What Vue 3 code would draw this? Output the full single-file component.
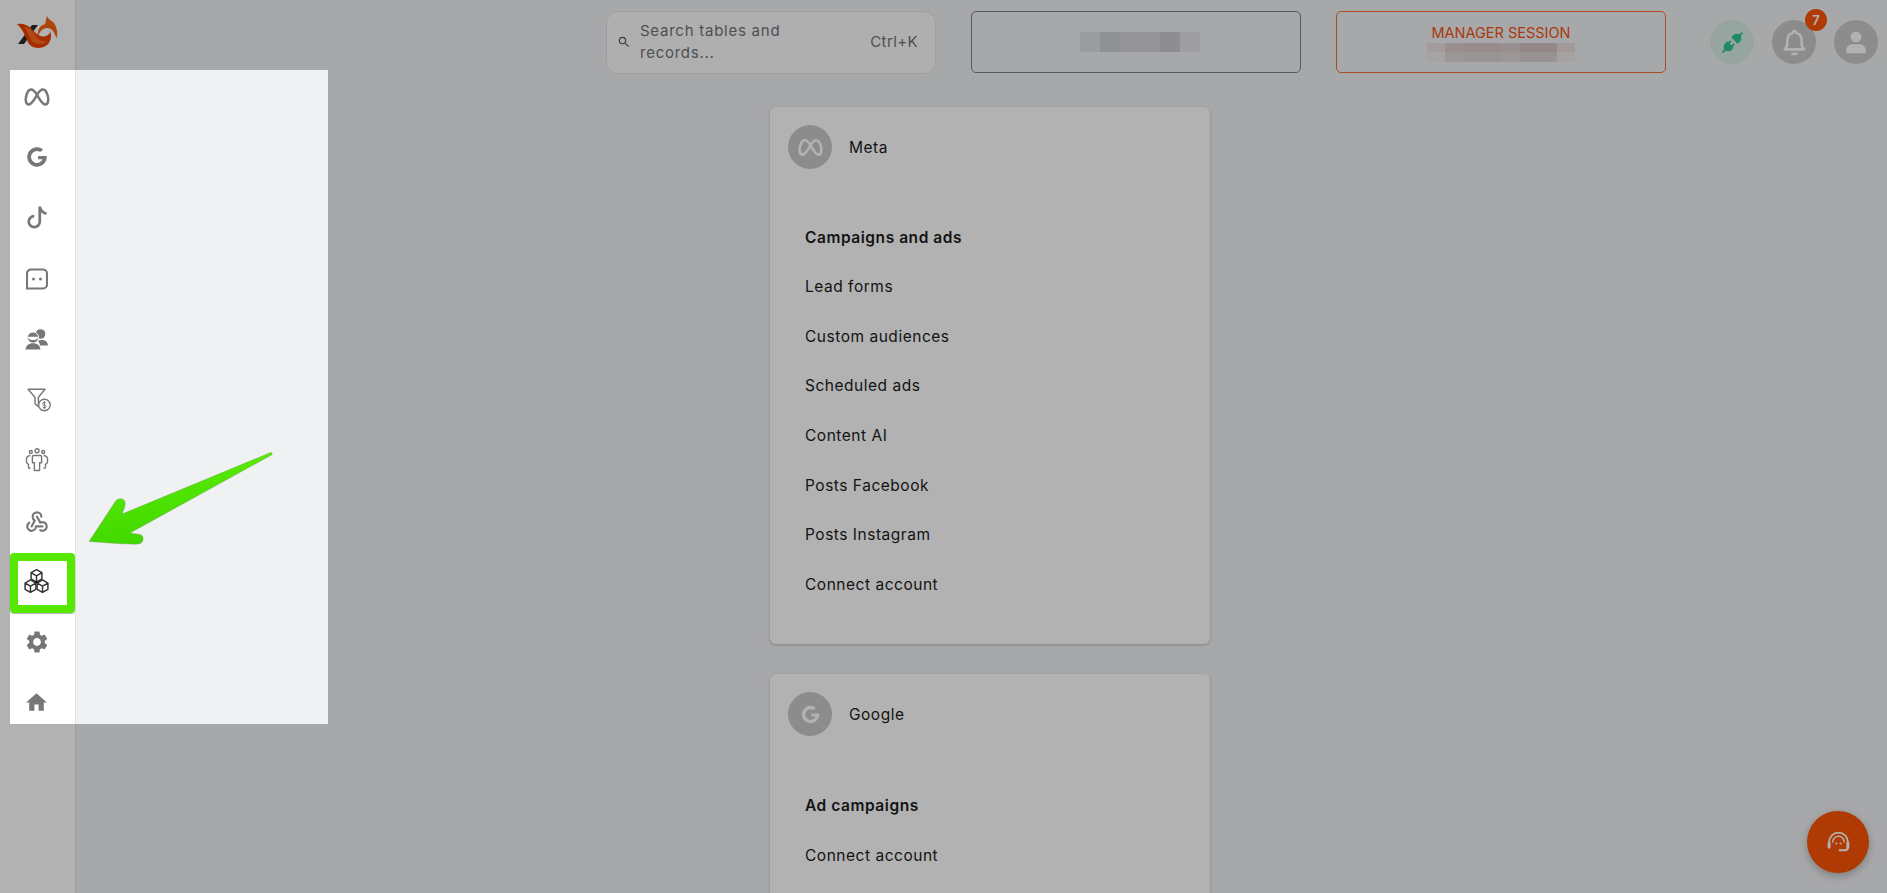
<script setup>
const metaPaths = [
  'M12 10.174c1.766 -2.784 3.315 -4.174 4.648 -4.174c2 0 3.263 2.213 4 5.217c.704 2.869 .5 6.783 -2 6.783c-1.114 0 -2.648 -1.565 -4.148 -3.652a27.627 27.627 0 0 1 -2.5 -4.174z',
  'M12 10.174c-1.766 -2.784 -3.315 -4.174 -4.648 -4.174c-2 0 -3.263 2.213 -4 5.217c-.704 2.869 -.5 6.783 2 6.783c1.114 0 2.648 -1.565 4.148 -3.652c1 -1.391 1.833 -2.783 2.5 -4.174z'
]
const googlePath = 'M20.945 11a9 9 0 1 1 -3.284 -5.997l-2.655 2.392a5.5 5.5 0 1 0 2.119 6.605h-4.125v-3h7.945z'
const gear = 'M19.14,12.94c0.04-0.3,0.06-0.61,0.06-0.94c0-0.32-0.02-0.64-0.07-0.94l2.03-1.58c0.18-0.14,0.23-0.41,0.12-0.61 l-1.92-3.32c-0.12-0.22-0.37-0.29-0.59-0.22l-2.39,0.96c-0.5-0.38-1.03-0.7-1.62-0.94L14.4,2.81c-0.04-0.24-0.24-0.41-0.48-0.41 h-3.84c-0.24,0-0.43,0.17-0.47,0.41L9.25,5.35C8.66,5.59,8.12,5.92,7.63,6.29L5.24,5.33c-0.22-0.08-0.47,0-0.59,0.22L2.74,8.87 C2.62,9.08,2.66,9.34,2.86,9.48l2.03,1.58C4.84,11.36,4.8,11.69,4.8,12s0.02,0.64,0.07,0.94l-2.03,1.58 c-0.18,0.14-0.23,0.41-0.12,0.61l1.92,3.32c0.12,0.22,0.37,0.29,0.59,0.22l2.39-0.96c0.5,0.38,1.03,0.7,1.62,0.94l0.36,2.54 c0.05,0.24,0.24,0.41,0.48,0.41h3.84c0.24,0,0.44-0.17,0.47-0.41l0.36-2.54c0.59-0.24,1.13-0.56,1.62-0.94l2.39,0.96 c0.22,0.08,0.47,0,0.59-0.22l1.92-3.32c0.12-0.22,0.07-0.47-0.12-0.61L19.14,12.94z M12,15.6c-1.98,0-3.6-1.62-3.6-3.6 s1.62-3.6,3.6-3.6s3.6,1.62,3.6,3.6S13.98,15.6,12,15.6z'
const metaLinks = ['Lead forms', 'Custom audiences', 'Scheduled ads', 'Content AI', 'Posts Facebook', 'Posts Instagram', 'Connect account']
const googleLinks = ['Connect account']
const blurA = ['#dfe0e3', '#cdced1', '#d4d5d8', '#d4d5d8', '#cbccd0', '#e3e3e6']
const blurTop = ['#e8e0e0', '#dccfcd', '#d8c8c8', '#d8c8c8', '#dcd0d0', '#d4c2c2', '#d4c2c2', '#e8dcdc']
const blurBottom = ['#efeaea', '#e0d8d8', '#dcd4d4', '#dcd4d4', '#e0d8d8', '#dcd2d2', '#dcd2d2', '#efe8e8']
</script>

<template>
  <div class="app">
    <aside class="rail">
      <div class="logo">
        <svg width="42" height="34" viewBox="16 15 42 34">
          <path d="M32 25 L38 25 L24 44 L18 44 Z" fill="#2a2a2a" />
          <path d="M17 24 C23 23 28 25 32 29 C36 34 41 38 46 36 C49 35 50 33 50 31 C52 35 51 42 47 45 C42 49 33 49 29 44 C26 39 24 30 17 24 Z" fill="#f04000" />
          <path d="M24 27 C29 27 33 31 36 36 C38 40 42 42 47 41 C43 45 36 45 32 41 C29 37 28 31 24 27 Z" fill="#ff6a20" />
          <path d="M39 29 C40 26 43 25 45 24 L47 16 C48 19 51 20 53 22 C56 25 58 31 57 38 L55 35 C54 31 51 28 47 28 C43 28 40 31 38 36 C37 33 38 31 39 29 Z" fill="#fb6412" />
        </svg>
      </div>
      <nav class="rail-list">
        <div class="rail-item">
          <svg class="stroke" width="30" height="30" viewBox="0 0 24 24"><path v-for="p in metaPaths" :key="p" :d="p" /></svg>
        </div>
        <div class="rail-item">
          <svg class="fill" width="26" height="26" viewBox="0 0 24 24"><path :d="googlePath" /></svg>
        </div>
        <div class="rail-item">
          <svg class="fill" width="22" height="23" viewBox="0 0 16 16"><path d="M9 0h1.98c.144.715.54 1.617 1.235 2.512C12.895 3.389 13.797 4 15 4v2c-1.753 0-3.07-.814-4-1.829V11a5 5 0 1 1-5-5v2a3 3 0 1 0 3 3V0Z" /></svg>
        </div>
        <div class="rail-item">
          <svg width="22" height="22" viewBox="0 0 22 22">
            <path d="M1 20.500V5.500A4 4 0 0 1 5 1.500h12a4 4 0 0 1 4 4v11a4 4 0 0 1-4 4z" fill="none" stroke="#777" stroke-width="2.100" />
            <circle cx="7.500" cy="11" r="1.500" fill="#777" /><circle cx="14.500" cy="11" r="1.500" fill="#777" />
          </svg>
        </div>
        <div class="rail-item">
          <svg class="fill" width="24" height="22" viewBox="0 0 24 22">
            <circle cx="15.500" cy="6" r="4.800" />
            <path d="M13 13c2-1.200 6-1.600 8 .2 1.200 1 1.800 2.600 2 4.300h-8c-.3-1.800-.9-3.300-2-4.500z" />
            <circle cx="8" cy="9.500" r="5.600" stroke="#fff" stroke-width="1" />
            <path d="M3.200 8.800h9.600v1.500c-1.200 2.400-8.400 2.400-9.600 0z" fill="#fff" />
            <path d="M0.600 21.500c0-3.700 3-6.300 7.400-6.300s7.400 2.600 7.400 6.300z" />
          </svg>
        </div>
        <div class="rail-item">
          <svg width="24" height="24" viewBox="0 0 24 24" class="shift-r" fill="none" stroke="#777">
            <path d="M1 1.200h17l-6.600 8v9.600l-3.400-3v-6.600z" stroke-width="1.400" stroke-linejoin="round" />
            <circle cx="17.400" cy="17" r="5.800" stroke-width="1.400" fill="#fff" />
            <path d="M19.200 15.200c-.5-1.100-3.600-1.200-3.700.4-.1 1.700 3.900 1.200 3.800 3-.1 1.500-3.500 1.500-4-.1M17.400 12.900v8.200" stroke-width="1" />
          </svg>
        </div>
        <div class="rail-item">
          <svg width="24" height="24" viewBox="0 0 24 24" fill="none" stroke="#777" stroke-width="1.400">
            <circle cx="12" cy="2.800" r="2" /><circle cx="5.800" cy="4" r="1.500" /><circle cx="18.200" cy="4" r="1.500" />
            <path d="M8.600 7.500h6.800c.8 0 1.200.5 1.200 1.200v6h-2v7.800H9.400v-7.800h-2v-6c0-.7.4-1.200 1.200-1.200z" stroke-linejoin="round" />
            <path d="M5.400 7.500C3.400 7.800 1.500 9 1.500 11v3c0 1.600 1.300 2 2 2.400v2.800c0 .7.5 1.100 1 1.100h1M18.600 7.500c2 .3 3.900 1.500 3.900 3.500v3c0 1.600-1.300 2-2 2.400v2.800c0 .7-.5 1.100-1 1.100h-1" />
          </svg>
        </div>
        <div class="rail-item">
          <svg class="stroke" width="26" height="26" viewBox="0 0 24 24">
            <path d="M4.876 13.610a4 4 0 1 0 6.124 3.390h6" />
            <path d="M15.066 20.502a4 4 0 1 0 1.934 -7.502c-.706 0 -1.424 .179 -2 .5l-3 -5.500" />
            <path d="M16 8a4 4 0 1 0 -8 0c0 1.506 .77 2.818 2 3.500l-3 5.500" />
          </svg>
        </div>
        <div class="rail-item">
          <svg width="27" height="27" viewBox="0 0 26 26" fill="none" stroke="#333" stroke-width="1.400" stroke-linejoin="round">
            <path d="M13 1.500l5.200 3v6l-5.200 3-5.200-3v-6zM7.800 4.500l5.200 3 5.200-3M13 7.500v6" />
            <path d="M7.200 11.500l5.200 3v6l-5.200 3-5.200-3v-6zM2 14.500l5.200 3 5.200-3M7.200 17.500v6" />
            <path d="M18.800 11.500l5.200 3v6l-5.200 3-5.200-3v-6zM13.600 14.500l5.200 3 5.200-3M18.800 17.500v6" />
            <circle cx="13" cy="13.500" r="1" fill="#000" stroke="none" />
          </svg>
        </div>
        <div class="rail-item">
          <svg class="fill" width="26" height="26" viewBox="0 0 24 24"><path :d="gear" /></svg>
        </div>
        <div class="rail-item">
          <svg class="fill" width="25" height="25" viewBox="0 0 24 24"><path d="M10 20v-6h4v6h5v-8h3L12 3 2 12h3v8z" /></svg>
        </div>
      </nav>
    </aside>

    <main class="main">
      <header class="topbar">
        <div class="search">
          <svg width="14" height="14" viewBox="0 0 24 24" fill="#555a60"><path d="M15.500 14h-.79l-.28-.27A6.471 6.471 0 0 0 16 9.500 6.500 6.500 0 1 0 9.500 16c1.610 0 3.090-.59 4.230-1.570l.27.28v.79l5 4.990L20.490 19l-4.990-5zm-6 0C7.010 14 5 11.990 5 9.500S7.010 5 9.500 5 14 7.010 14 9.500 11.990 14 9.500 14z" /></svg>
          <span class="search-text">Search tables and records...</span>
          <span class="shortcut">Ctrl+K</span>
        </div>
        <div class="session session-dark">
          <div class="mosaic">
            <i v-for="(c, i) in blurA" :key="i" :style="{ background: c }"></i>
          </div>
        </div>
        <div class="session session-orange">
          <span class="session-title">MANAGER SESSION</span>
          <div class="mosaic mosaic-small">
            <i v-for="(c, i) in blurTop" :key="'t' + i" :style="{ background: c }"></i>
          </div>
          <div class="mosaic mosaic-small">
            <i v-for="(c, i) in blurBottom" :key="'b' + i" :style="{ background: c }"></i>
          </div>
        </div>
        <div class="round round-green">
          <svg width="25" height="25" viewBox="0 0 24 24" fill="#2cc892" stroke="#2cc892" stroke-width="1.800" stroke-linecap="round" stroke-linejoin="round">
            <path d="M7 12l5 5l-1.500 1.500a3.536 3.536 0 1 1 -5 -5l1.500 -1.500z" />
            <path d="M17 12l-5 -5l1.500 -1.500a3.536 3.536 0 1 1 5 5l-1.500 1.500z" />
            <path d="M3 21l2.500 -2.500M18.500 5.500l2.500 -2.500M10 11l-2 2M13 14l-2 2" />
          </svg>
        </div>
        <div class="round bell">
          <svg width="31" height="31" viewBox="0 0 24 24" fill="none" stroke="#fff" stroke-width="2" stroke-linecap="round" stroke-linejoin="round">
            <path d="M12 3.200a1.400 1.400 0 0 1 1.400 1.500c3 .8 4.200 3 4.200 6v3.600l1.800 3H4.600l1.800-3v-3.600c0-3 1.200-5.200 4.200-6A1.400 1.400 0 0 1 12 3.200z" />
            <path d="M10.400 20.800h3.200" />
          </svg>
          <span class="badge">7</span>
        </div>
        <div class="round">
          <svg width="28" height="28" viewBox="0 0 24 24" fill="#fff"><circle cx="12" cy="7.600" r="4.600" /><path d="M3.600 21v-1.800c0-3.400 3-5.200 5.400-5.200h6c2.400 0 5.400 1.800 5.400 5.200V21a1 1 0 0 1-1 .6H4.600a1 1 0 0 1-1-.6z" /></svg>
        </div>
      </header>

      <section class="cards">
        <article class="card">
          <div class="card-head">
            <div class="avatar">
              <svg width="29" height="29" viewBox="0 0 24 24" fill="none" stroke="#fff" stroke-width="2.200"><path v-for="p in metaPaths" :key="p" :d="p" /></svg>
            </div>
            <span>Meta</span>
          </div>
          <ul class="links">
            <li class="strong">Campaigns and ads</li>
            <li v-for="l in metaLinks" :key="l">{{ l }}</li>
          </ul>
        </article>
        <article class="card">
          <div class="card-head">
            <div class="avatar">
              <svg width="23" height="23" viewBox="0 0 24 24" fill="#fff"><path :d="googlePath" /></svg>
            </div>
            <span>Google</span>
          </div>
          <ul class="links">
            <li class="strong">Ad campaigns</li>
            <li v-for="l in googleLinks" :key="l">{{ l }}</li>
          </ul>
        </article>
      </section>

      <button class="fab" type="button" aria-label="Support">
        <svg width="25" height="25" viewBox="0 0 24 24" fill="none" stroke="#fff" stroke-width="1.700" stroke-linecap="round">
          <path d="M3 13v-1.500a9 9 0 0 1 18 0V13" />
          <path d="M6.500 11.500a5.500 5.500 0 0 1 11 0" stroke-width="1.300" />
          <path d="M3 12.500v4M21 12.500v4" stroke-width="2.800" />
          <path d="M21 16.500c0 2-1.200 3-3 3h-5" stroke-width="1.900" />
          <circle cx="10" cy="13" r="1" fill="#fff" stroke="none" /><circle cx="14" cy="13" r="1" fill="#fff" stroke="none" />
        </svg>
      </button>
    </main>

    <div class="tour">
      <div class="spotlight"></div>
      <div class="marker"></div>
      <svg class="arrow" width="200" height="110" viewBox="80 445 200 110">
        <defs>
          <linearGradient id="arrowFill" x1="0" y1="0" x2="0.2" y2="1">
            <stop offset="0" stop-color="#5cf000" />
            <stop offset="1" stop-color="#42d800" />
          </linearGradient>
        </defs>
        <path d="M89 541.500 L115 502 C117 498 122 498 124 500 C126 503 125.500 506 122 514 L270.500 452.600 C272 452 273 454 271.500 455 L130 533 L140 534.500 C144 535.500 144 541 141 543 C139 545 128 544 117 543.600 Z" fill="url(#arrowFill)" stroke="#777" stroke-width=".3" />
      </svg>
    </div>
  </div>
</template>

<style scoped>
.app {
  display: flex;
  width: 1887px;
  height: 893px;
  overflow: hidden;
  position: relative;
  background: #f0f1f3;
  font-family: Inter, "Liberation Sans", sans-serif;
  color: #1c1c1c;
}
.rail {
  width: 75px;
  flex: none;
  background: #fff;
  border-right: 1px solid #dfe1e5;
  display: flex;
  flex-direction: column;
}
.logo {
  height: 66.500px;
  flex: none;
  padding: 15px 0 0 16px;
  box-sizing: border-box;
}
.logo svg { display: block; }
.rail-list { display: flex; flex-direction: column; }
.rail-item {
  height: 60.600px;
  display: flex;
  align-items: center;
  justify-content: center;
  padding-right: 2px;
  box-sizing: border-box;
}
.stroke { fill: none; stroke: #777; stroke-width: 2; stroke-linecap: round; stroke-linejoin: round; }
.fill { fill: #777; }
.shift-r { margin-left: 4px; }
.main { flex: 1; position: relative; min-width: 0; }
.topbar {
  display: flex;
  align-items: center;
  height: 84px;
  padding-left: 530px;
  box-sizing: border-box;
}
.search {
  width: 330px;
  height: 63px;
  flex: none;
  box-sizing: border-box;
  background: #fbfbfb;
  border: 1px solid #e2e3e5;
  border-radius: 12px;
  display: flex;
  align-items: center;
  padding: 0 17px 0 10px;
  color: #6f7378;
  font-size: 15px;
  letter-spacing: .75px;
  line-height: 22px;
}
.search-text { width: 150px; margin-left: 9px; }
.shortcut { margin-left: auto; letter-spacing: .4px; }
.session {
  width: 330px;
  height: 62px;
  box-sizing: border-box;
  border-radius: 5px;
  flex: none;
  margin-left: 35px;
  display: flex;
  flex-direction: column;
  align-items: center;
  justify-content: center;
}
.session-dark { border: 1px solid #7c7f85; padding-left: 7px; }
.session-orange { border: 1px solid #f46d3a; }
.session-title {
  color: #f0530f;
  font-size: 14.500px;
  line-height: 20px;
}
.mosaic { display: flex; height: 20px; flex: none; }
.mosaic i { width: 20px; display: block; }
.mosaic-small { height: 9.500px; }
.mosaic-small i { width: 18.600px; }
.round {
  width: 44px;
  height: 44px;
  flex: none;
  border-radius: 50%;
  background: #c9c9c9;
  margin-left: 18px;
  display: flex;
  align-items: center;
  justify-content: center;
  position: relative;
}
.round-green { background: #d8ece6; margin-left: 44px; }
.badge {
  position: absolute;
  top: -11px;
  right: -11px;
  width: 22px;
  height: 22px;
  border-radius: 50%;
  background: #fc5305;
  color: #fff;
  font-size: 13px;
  font-weight: 600;
  display: flex;
  align-items: center;
  justify-content: center;
}
.cards {
  padding: 23px 0 0 694px;
  display: flex;
  flex-direction: column;
  gap: 30px;
}
.card {
  width: 440px;
  height: 537px;
  flex: none;
  box-sizing: border-box;
  background: #fff;
  border-radius: 6px;
  box-shadow: 0 1px 3px rgba(0, 0, 0, .22);
  padding: 18px 18px 0;
}
.card-head {
  display: flex;
  align-items: center;
  gap: 17px;
  font-size: 15.500px;
  letter-spacing: .5px;
  height: 44px;
}
.avatar {
  width: 44px;
  height: 44px;
  border-radius: 50%;
  background: #c9c9c9;
  display: flex;
  align-items: center;
  justify-content: center;
}
.links {
  list-style: none;
  margin: 44px 0 0;
  padding: 0 0 0 17px;
  font-size: 15.500px;
  letter-spacing: .52px;
}
.links li {
  height: 49.600px;
  display: flex;
  align-items: center;
}
.links .strong {
  height: 49px;
  font-weight: 600;
  letter-spacing: .55px;
}
.card:last-child .links .strong { height: 50.500px; }
.fab {
  position: absolute;
  right: 18px;
  bottom: 20px;
  width: 62px;
  height: 62px;
  border: 0;
  padding: 0;
  border-radius: 50%;
  background: #fc5305;
  box-shadow: 0 3px 8px rgba(0, 0, 0, .25);
  display: flex;
  align-items: center;
  justify-content: center;
}
.tour {
  position: absolute;
  inset: 0;
  overflow: hidden;
  pointer-events: none;
}
.spotlight {
  position: absolute;
  left: 10px;
  top: 70px;
  width: 318px;
  height: 654px;
  box-shadow: 0 0 0 3000px rgba(0, 0, 0, .3);
}
.marker {
  position: absolute;
  left: 10px;
  top: 553px;
  width: 65px;
  height: 60px;
  box-sizing: border-box;
  border: 8px solid #56e800;
  border-radius: 4px;
  box-shadow: 0 1px 1px rgba(0, 0, 0, .3);
}
.arrow {
  position: absolute;
  left: 80px;
  top: 445px;
}
</style>

<style>
html, body { margin: 0; overflow: hidden; }
</style>
